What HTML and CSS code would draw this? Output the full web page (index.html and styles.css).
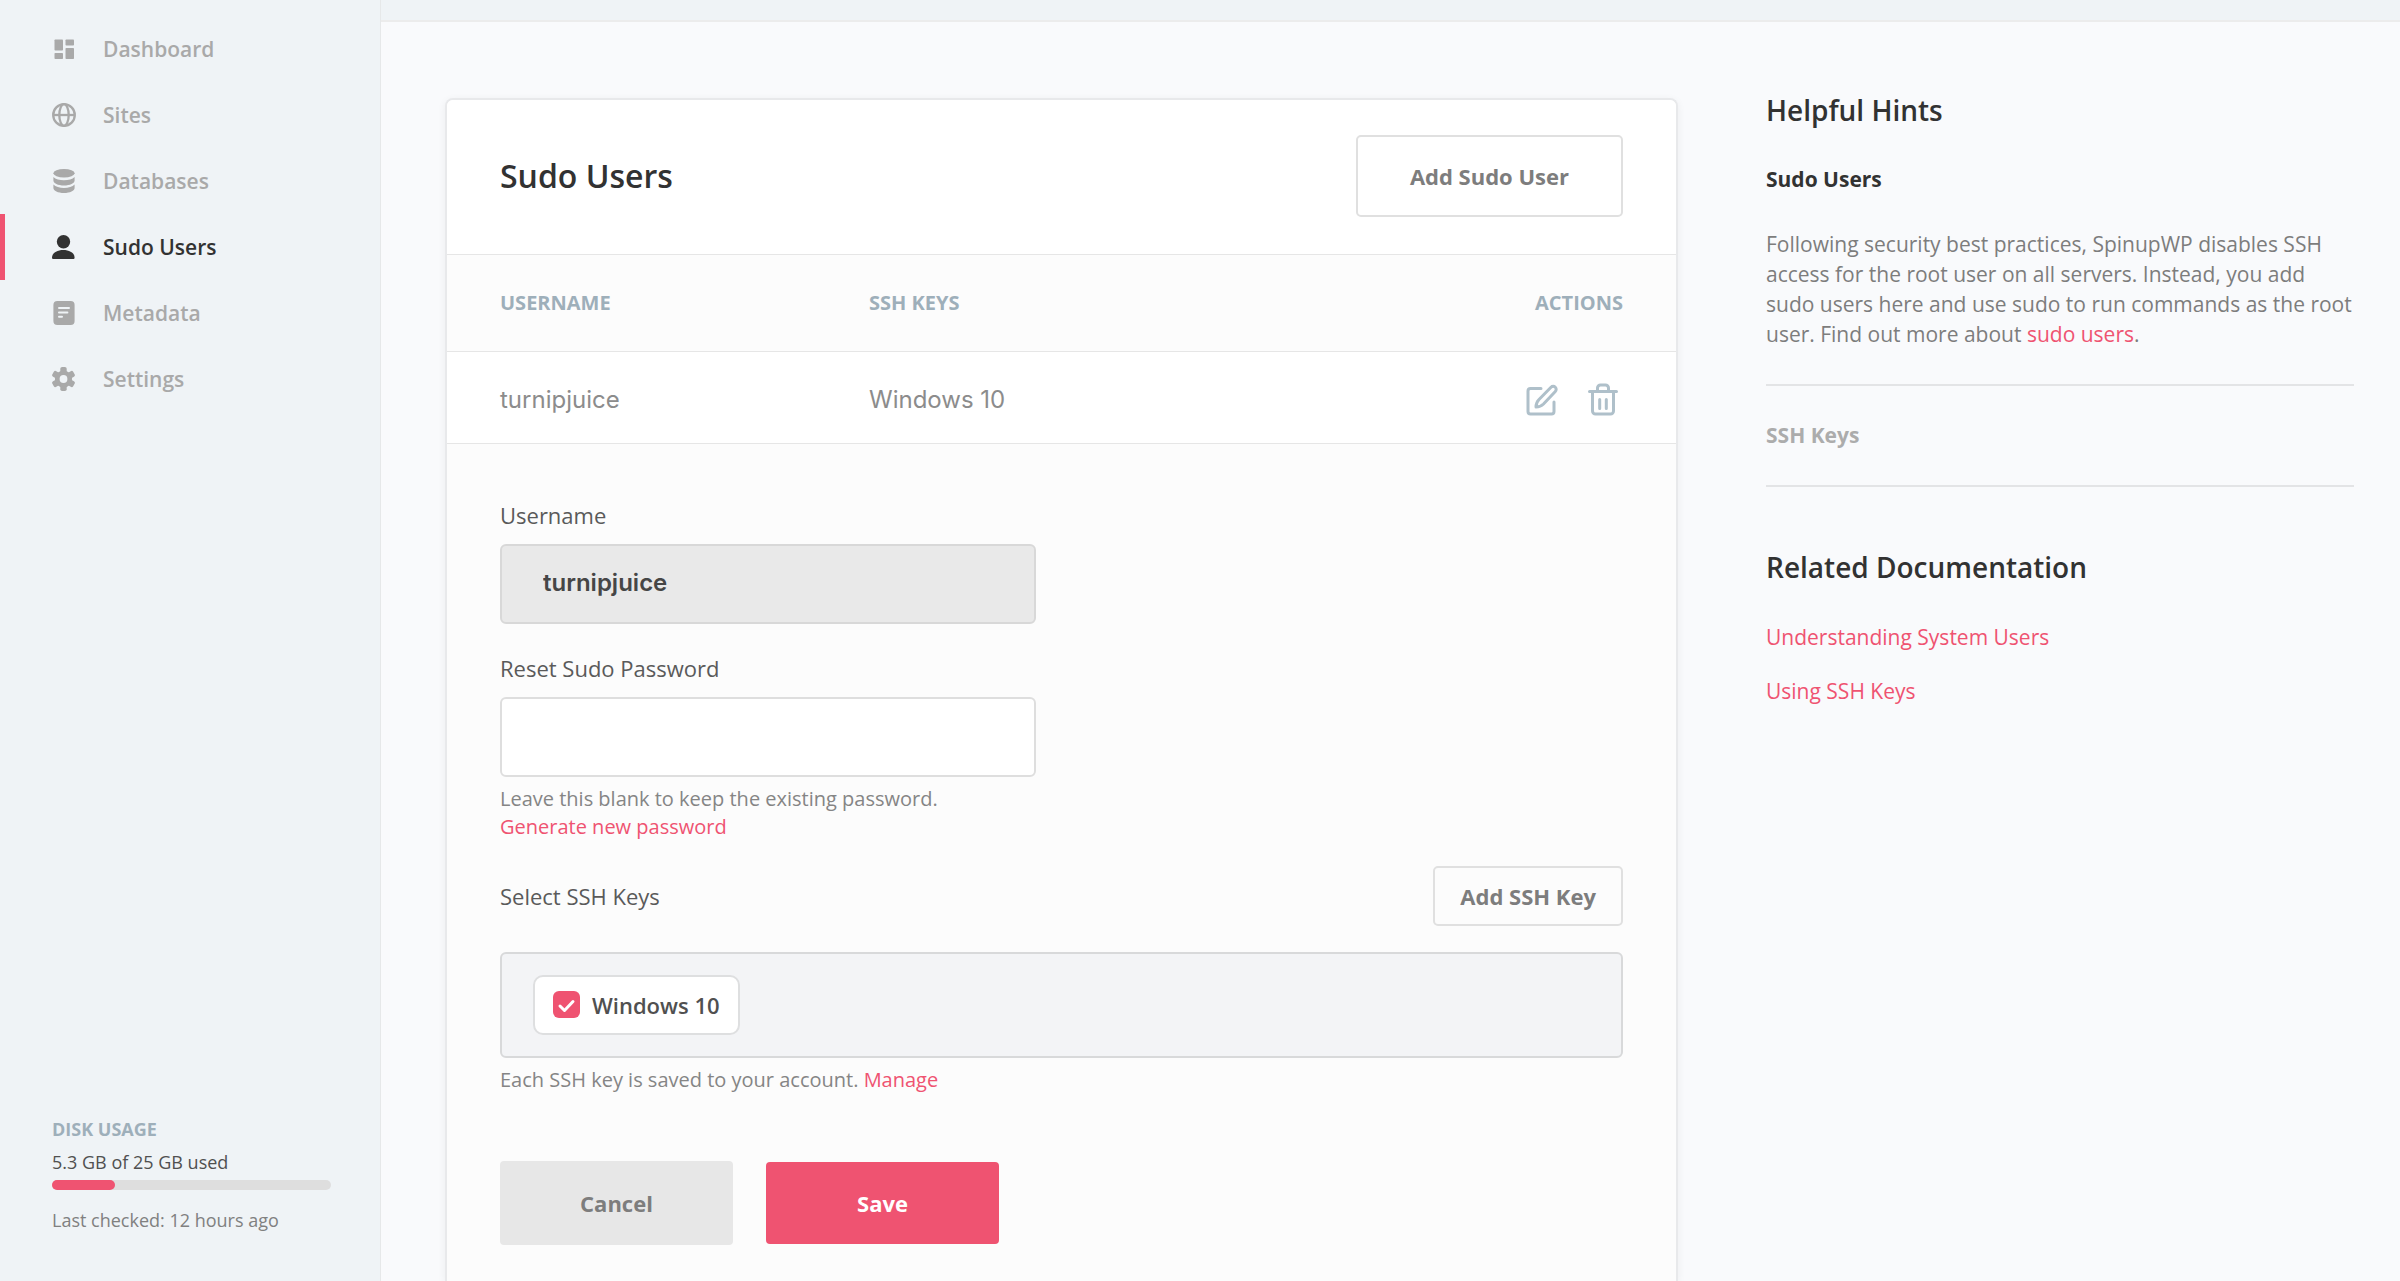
FILE: index.html
```html
<!DOCTYPE html>
<html lang="en">
<head>
<meta charset="utf-8">
<meta name="viewport" content="width=device-width, initial-scale=1">
<title>Sudo Users - SpinupWP</title>
<link rel="stylesheet" href="styles.css">
</head>
<body>
<div class="app">
  <aside class="sidebar">
    <nav class="nav" aria-label="Server">
      <a class="nav-item" href="#dashboard">
        <svg class="nav-icon" viewBox="0 0 24 24" fill="currentColor" aria-hidden="true"><rect x="2.500" y="2.500" width="8.500" height="11" rx=".8"/><rect x="2.500" y="16" width="8.500" height="6" rx=".8"/><rect x="13.500" y="2.500" width="8.500" height="6" rx=".8"/><rect x="13.500" y="11" width="8.500" height="11" rx=".8"/></svg>
        <span>Dashboard</span>
      </a>
      <a class="nav-item" href="#sites">
        <svg class="nav-icon" viewBox="0 0 24 24" fill="none" stroke="currentColor" stroke-width="2.300" aria-hidden="true"><circle cx="12" cy="12" r="10.800"/><ellipse cx="12" cy="12" rx="4.700" ry="10.800"/><path d="M1 12h22"/></svg>
        <span>Sites</span>
      </a>
      <a class="nav-item" href="#databases">
        <svg class="nav-icon" viewBox="0 0 24 24" fill="currentColor" aria-hidden="true"><ellipse cx="12" cy="4.200" rx="10.600" ry="4.200"/><path d="M1.400 8c2 2.200 6.200 3.200 10.600 3.200S20.600 10.200 22.600 8v3.500c0 2.800-4.600 5-10.600 5s-10.600-2.200-10.600-5z"/><path d="M1.400 15.500c2 2.200 6.200 3.400 10.600 3.400s8.600-1.200 10.600-3.400v3.500c0 2.800-4.600 5-10.600 5S1.400 21.800 1.400 19z"/></svg>
        <span>Databases</span>
      </a>
      <a class="nav-item is-active" href="#sudo-users" aria-current="page">
        <svg class="nav-icon" viewBox="0 0 24 24" fill="currentColor" aria-hidden="true"><circle cx="11.500" cy="6.800" r="6.700"/><path d="M0 22.500C0 18 5 15 11.300 15s11.300 3 11.300 7.500c0 1-.6 1.500-1.500 1.500H1.500C.6 24 0 23.500 0 22.500z"/></svg>
        <span>Sudo Users</span>
      </a>
      <a class="nav-item" href="#metadata">
        <svg class="nav-icon" viewBox="0 0 24 24" aria-hidden="true"><rect x="1.400" y="0" width="21.200" height="24" rx="4" fill="currentColor"/><path d="M7 7h10M7 11.500h8.400M7 15.800h3" fill="none" stroke="#eff3f6" stroke-width="2" stroke-linecap="round"/></svg>
        <span>Metadata</span>
      </a>
      <a class="nav-item" href="#settings">
        <svg class="nav-icon" viewBox="0 0 24 24" aria-hidden="true"><g fill="currentColor"><circle cx="11.500" cy="12" r="8.600"/><rect x="8.300" y="0" width="6.400" height="24" rx="1.800"/><rect x="8.300" y="0" width="6.400" height="24" rx="1.800" transform="rotate(60 11.500 12)"/><rect x="8.300" y="0" width="6.400" height="24" rx="1.800" transform="rotate(120 11.500 12)"/></g><circle cx="11.500" cy="12" r="3.900" fill="#eff3f6"/></svg>
        <span>Settings</span>
      </a>
    </nav>
    <section class="disk" aria-label="Disk usage">
      <h2 class="disk-title">DISK USAGE</h2>
      <p class="disk-used">5.3 GB of 25 GB used</p>
      <div class="disk-bar"><div class="disk-fill" style="width: 22.500%"></div></div>
      <p class="disk-checked">Last checked: 12 hours ago</p>
    </section>
  </aside>

  <div class="page">
    <header class="topbar"></header>
    <div class="content">
      <main class="card">
        <div class="card-head">
          <h1 class="card-title">Sudo Users</h1>
          <button class="btn btn-outline btn-large" type="button">Add Sudo User</button>
        </div>
        <table class="users">
          <thead>
            <tr><th class="col-user">USERNAME</th><th>SSH KEYS</th><th class="col-actions">ACTIONS</th></tr>
          </thead>
          <tbody>
            <tr>
              <td>turnipjuice</td>
              <td>Windows 10</td>
              <td class="col-actions">
                <div class="actions">
                  <button class="icon-btn" type="button" aria-label="Edit">
                    <svg viewBox="0 0 32 36" fill="none" stroke="currentColor" stroke-width="3" stroke-linecap="round" stroke-linejoin="round"><path d="M15 6.500H4.500A2.500 2.500 0 0 0 2 9v20.500A2.500 2.500 0 0 0 4.500 32h21a2.500 2.500 0 0 0 2.500-2.500V20"/><path d="M25 5.200a3 3 0 0 1 4.300 4.300L17.500 22c-2 2-4.500 3-7.500 3 0-3 1-5.500 3-7.500z"/></svg>
                  </button>
                  <button class="icon-btn" type="button" aria-label="Delete">
                    <svg viewBox="0 0 32 36" fill="none" stroke="currentColor" stroke-width="3" stroke-linecap="round" stroke-linejoin="round"><path d="M2.500 9.500h27M5.500 9.500v19.500a3 3 0 0 0 3 3h15a3 3 0 0 0 3-3V9.500M10.500 9.500V6a3 3 0 0 1 3-3h5a3 3 0 0 1 3 3v3.500M12.700 17.500v9M19.300 17.500v9"/></svg>
                  </button>
                </div>
              </td>
            </tr>
          </tbody>
        </table>
        <form class="form">
          <div class="field">
            <label class="label" for="username">Username</label>
            <input class="input" id="username" type="text" value="turnipjuice" disabled>
          </div>
          <div class="field">
            <label class="label" for="password">Reset Sudo Password</label>
            <input class="input" id="password" type="password">
            <p class="hint">Leave this blank to keep the existing password.<br><a href="#generate">Generate new password</a></p>
          </div>
          <div class="keys-head">
            <span class="label">Select SSH Keys</span>
            <button class="btn btn-outline btn-small" type="button">Add SSH Key</button>
          </div>
          <div class="keys">
            <label class="chip"><input class="check" type="checkbox" checked><svg class="tick" viewBox="0 0 27 27" fill="none" stroke="#fff" stroke-width="3" stroke-linecap="round" stroke-linejoin="round" aria-hidden="true"><path d="M7 15l4.500 4.500L20 10.500"/></svg><span>Windows 10</span></label>
          </div>
          <p class="hint">Each SSH key is saved to your account. <a href="#manage">Manage</a></p>
          <div class="form-actions">
            <button class="btn btn-cancel" type="button">Cancel</button>
            <button class="btn btn-save" type="submit">Save</button>
          </div>
        </form>
      </main>

      <aside class="help">
        <h2 class="help-title">Helpful Hints</h2>
        <section class="topic">
          <h3 class="topic-title">Sudo Users</h3>
          <p class="topic-text">Following security best practices, SpinupWP disables SSH access for the root user on all servers. Instead, you add sudo users here and use sudo to run commands as the root user. Find out more about <a href="#sudo">sudo users</a>.</p>
        </section>
        <section class="topic is-closed">
          <h3 class="topic-title">SSH Keys</h3>
        </section>
        <h2 class="help-title docs-title">Related Documentation</h2>
        <ul class="docs">
          <li><a href="#system-users">Understanding System Users</a></li>
          <li><a href="#using-keys">Using SSH Keys</a></li>
        </ul>
      </aside>
    </div>
  </div>
</div>
</body>
</html>
```
FILE: styles.css
```css
* {
  box-sizing: border-box;
}

body {
  margin: 0;
  background: #f9fafc;
  color: #323232;
  font-family: "Open Sans", sans-serif;
  font-size: 21px;
  line-height: 30px;
}

h1, h2, h3, p, ul {
  margin: 0;
  padding: 0;
}

ul {
  list-style: none;
}

a {
  color: #ef5371;
  text-decoration: none;
}

.app {
  display: flex;
  min-height: 100vh;
}

/* Sidebar */
.sidebar {
  display: flex;
  flex: none;
  flex-direction: column;
  justify-content: space-between;
  width: 381px;
  padding: 16px 0 46px;
  border-right: 1px solid #e6e8e9;
  background: #eff3f6;
}

.nav-item {
  display: flex;
  align-items: center;
  gap: 27px;
  height: 66px;
  padding-left: 52px;
  color: #a9a9a9;
  font-weight: 600;
}

.nav-item.is-active {
  padding-left: 47px;
  border-left: 5px solid #ef5371;
  color: #323232;
}

.nav-icon {
  flex: none;
  width: 24px;
  height: 24px;
}

.disk {
  padding: 0 49px 0 52px;
  font-size: 18px;
}

.disk-title {
  color: #9eafba;
  font-size: 18px;
  font-weight: 700;
}

.disk-used {
  margin-top: 3px;
  color: #505050;
}

.disk-bar {
  height: 10px;
  margin: 3px 0 15px;
  border-radius: 5px;
  background: #dedede;
}

.disk-fill {
  height: 100%;
  border-radius: 5px;
  background: #ef5371;
}

.disk-checked {
  color: #808080;
}

/* Page frame */
.page {
  display: flex;
  flex: 1;
  flex-direction: column;
  min-width: 0;
}

.topbar {
  height: 22px;
  border-bottom: 2px solid #ececec;
  background: #eff3f6;
}

.content {
  display: flex;
  flex: 1;
  gap: 88px;
  padding: 76px 46px 0 64px;
}

/* Card */
.card {
  flex: 1;
  border: 2px solid #e8e9eb;
  border-bottom: 0;
  border-radius: 8px 8px 0 0;
  background: #fcfcfc;
  box-shadow: 0 2px 8px rgba(0, 0, 0, 0.06);
}

.card-head {
  display: flex;
  align-items: center;
  justify-content: space-between;
  padding: 35px 53px 37px;
  border-bottom: 1px solid #e6e6e6;
  border-radius: 6px 6px 0 0;
  background: #fff;
}

.card-title {
  font-size: 32px;
  font-weight: 600;
  line-height: 40px;
}

.users {
  width: 100%;
  border-collapse: collapse;
  table-layout: fixed;
}

.users th,
.users td {
  padding: 0;
  border-bottom: 1px solid #e6e6e6;
  text-align: left;
}

.users th {
  height: 96px;
  color: #9eafba;
  font-size: 20px;
  font-weight: 700;
}

.users td {
  height: 92px;
  padding-top: 5px;
  background: #fff;
  color: #8c8c8c;
  font-family: Inter, sans-serif;
  font-size: 24px;
}

.users tr > :first-child {
  padding-left: 53px;
}

.col-user {
  width: 422px;
}

.users .col-actions {
  padding-right: 53px;
  text-align: right;
}

.actions {
  display: flex;
  justify-content: flex-end;
  gap: 29px;
  padding-right: 4px;
}

.icon-btn {
  width: 32px;
  height: 36px;
  padding: 0;
  border: 0;
  background: none;
  color: #afc0ca;
}

/* Buttons */
.btn {
  border: 0;
  border-radius: 4px;
  font-family: inherit;
  font-size: 22px;
  font-weight: 700;
  line-height: 30px;
}

.btn-outline {
  border: 2px solid #e0e0e0;
  border-radius: 5px;
  background: transparent;
  color: #7d7d7d;
}

.btn-large {
  padding: 24px 52px;
}

.btn-small {
  padding: 13px 25px;
}

.btn-cancel,
.btn-save {
  width: 233px;
  padding: 26px 0;
}

.btn-cancel {
  padding: 27px 0;
  background: #e7e7e7;
  color: #7d7d7d;
}

.btn-save {
  background: #ef5371;
  color: #fff;
}

/* Form */
.form {
  padding: 56px 53px 34px;
}

.field {
  margin-bottom: 29px;
}

.label {
  display: block;
  color: #5a5a5a;
  font-size: 22px;
}

.input {
  display: block;
  width: 100%;
  max-width: 536px;
  height: 80px;
  margin-top: 14px;
  padding: 0 41px 2px;
  border: 2px solid #dedede;
  border-radius: 6px;
  background: #fff;
  color: #464646;
  font-family: Inter, sans-serif;
  font-size: 24px;
  font-weight: 600;
}

.input:disabled {
  border-color: #d8d8d8;
  background: #e9e9e9;
}

.hint {
  margin-top: 8px;
  color: #858585;
  font-size: 20px;
  line-height: 28px;
}

.keys-head {
  display: flex;
  align-items: center;
  justify-content: space-between;
  margin-top: -4px;
}

.keys {
  display: flex;
  flex-wrap: wrap;
  gap: 16px;
  margin-top: 26px;
  padding: 21px 31px;
  border: 2px solid #d8d9da;
  border-radius: 6px;
  background: #f3f4f6;
}

.chip {
  display: flex;
  align-items: center;
  gap: 12px;
  height: 60px;
  padding: 0 18px;
  border: 2px solid #dedfe0;
  border-radius: 10px;
  background: #fff;
  color: #505050;
  font-size: 22px;
  font-weight: 600;
}

.check {
  width: 27px;
  height: 27px;
  margin: 0;
  border-radius: 6px;
  appearance: none;
  background: #fff;
  box-shadow: inset 0 0 0 2px #d8d8d8;
}

.check:checked {
  background: #ef5371;
  box-shadow: none;
}

.tick {
  flex: none;
  width: 27px;
  height: 27px;
  margin-left: -39px;
  pointer-events: none;
}

.form-actions {
  display: flex;
  align-items: center;
  gap: 33px;
  margin-top: 67px;
}

/* Help column */
.help {
  flex: none;
  width: 588px;
}

.help-title {
  margin-top: -8px;
  font-size: 28px;
  font-weight: 600;
  line-height: 40px;
}

.topic {
  border-bottom: 2px solid #e3e4e6;
  padding: 34px 0 35px;
}

.topic-title {
  font-size: 21px;
  font-weight: 700;
}

.topic-text {
  margin-top: 35px;
  color: #7d7d7d;
}

.is-closed .topic-title {
  color: #acacac;
}

.docs-title {
  margin-top: 60px;
}

.docs {
  display: grid;
  gap: 24px;
  margin-top: 35px;
}
```
